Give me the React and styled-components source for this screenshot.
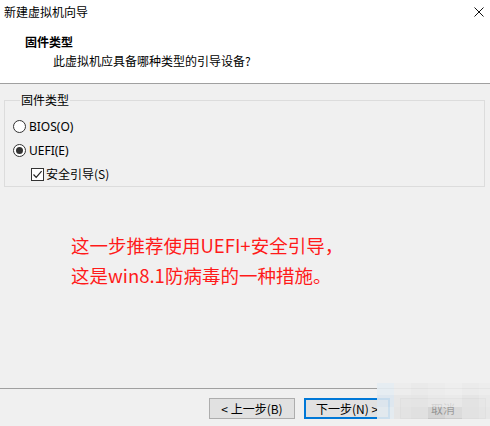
import React from "react";
import styled, { createGlobalStyle } from "styled-components";

const GlobalStyle = createGlobalStyle`
  html, body { margin: 0; padding: 0; }
  body {
    background: #f0f0f0;
    font-family: "Noto Sans CJK SC", "Noto Sans", sans-serif;
    font-size: 12px;
    color: #000;
  }
`;

const Page = styled.div`
  position: relative;
  width: 490px;
  height: 426px;
  display: flex;
  flex-direction: column;
  overflow: hidden;
`;

const Header = styled.header`
  height: 83px;
  background: #fff;
  border-bottom: 1px solid #a0a0a0;
  display: flex;
  flex-direction: column;
  flex-shrink: 0;
`;

const TitleBar = styled.div`
  height: 24px;
  display: flex;
  align-items: center;
  justify-content: space-between;
  padding: 0 6px 0 4px;
`;

const WindowTitle = styled.span`
  font-size: 12px;
  line-height: 24px;
  color: #000;
`;

const CloseIcon = styled.svg`
  width: 10px;
  height: 10px;
  display: block;
`;

const HeaderTitle = styled.div`
  margin: 10px 0 0 25px;
  font-weight: bold;
  font-size: 12px;
  line-height: 16px;
`;

const HeaderSubtitle = styled.div`
  margin: 3px 0 0 53px;
  font-size: 12px;
  line-height: 16px;
`;

const Main = styled.main`
  flex: 1;
  padding: 8px 5px 0 4px;
  display: flex;
  flex-direction: column;
`;

const Group = styled.fieldset`
  margin: 0;
  padding: 6px 0 0 8px;
  border: 1px solid #dcdcdc;
  min-width: 0;
`;

const Legend = styled.legend`
  padding: 0 1px;
  margin-left: 7px;
  font-size: 12px;
  line-height: 16px;
`;

const OptionRow = styled.label`
  height: 24px;
  display: flex;
  align-items: center;
  gap: ${(p) => p.$gap || 3}px;
  padding-left: ${(p) => p.$indent || 0}px;
  font-size: 12px;
  font-family: "Noto Sans", "Noto Sans CJK SC", sans-serif;
`;

const OptionText = styled.span`
  font-family: "Noto Sans CJK SC", "Noto Sans", sans-serif;
  line-height: 16px;
`;

const RadioCircle = styled.span`
  width: 11px;
  height: 11px;
  border: 1px solid #333;
  border-radius: 50%;
  background: #fff;
  display: flex;
  align-items: center;
  justify-content: center;
  flex-shrink: 0;
  &::after {
    content: "";
    width: 7px;
    height: 7px;
    border-radius: 50%;
    background: #333;
    display: ${(p) => (p.$checked ? "block" : "none")};
  }
`;

const CheckBox = styled.span`
  width: 11px;
  height: 11px;
  border: 1px solid #333;
  background: #fff;
  display: flex;
  align-items: center;
  justify-content: center;
  flex-shrink: 0;
`;

const Note = styled.div`
  margin: 43px 0 0 67px;
  color: #ff1a1a;
  font-size: 18.5px;
  line-height: 30px;
  font-family: "Noto Sans CJK SC", "Noto Sans", sans-serif;
`;

const Footer = styled.footer`
  height: 38px;
  box-sizing: border-box;
  border-top: 1px solid #a0a0a0;
  display: flex;
  justify-content: flex-end;
  align-items: flex-start;
  padding: 9px 4px 0 0;
  gap: 9px;
  flex-shrink: 0;
`;

const Button = styled.button`
  width: 86px;
  height: 21px;
  padding: 0;
  margin-left: ${(p) => p.$extra || 0}px;
  box-sizing: border-box;
  background: #e1e1e1;
  border: ${(p) => (p.$primary ? "2px solid #0078d7" : "1px solid #adadad")};
  font-family: "Noto Sans CJK SC", "Noto Sans", sans-serif;
  font-size: 12px;
  line-height: 17px;
  color: #000;
  display: flex;
  align-items: center;
  justify-content: center;
`;

const Mosaic = styled.div`
  position: absolute;
  left: 377px;
  top: 383px;
  display: grid;
  grid-template-columns: repeat(7, 17px);
  grid-auto-rows: 12px;
  pointer-events: none;
`;

const Cell = styled.div`
  background: ${(p) => p.$c};
  opacity: ${(p) => p.$o ?? 0.9};
`;

const mosaicColors = [
  ["#e4ecf2", "#ececec", "#e9e9e9", "#ebebeb", "#ededed", "#eaeaea", "#ececec"],
  ["#dbe6ee", "#e6e6e6", "#e4e4e4", "#e8e8e8", "#e9e9e9", "#e3e3e3", "#e8e8e8"],
  ["#e2eaf0", "#e3e3e3", "#e0e0e0", "#cfcfcf", "#d9d9d9", "#e2e2e2", "#e6e6e6"],
];

export default function App() {
  return (
    <>
      <GlobalStyle />
      <Page>
        <Header>
          <TitleBar>
            <WindowTitle>新建虚拟机向导</WindowTitle>
            <CloseIcon viewBox="0 0 10 10">
              <path d="M0.5 0.5 L9.5 9.5 M9.5 0.5 L0.5 9.5" stroke="#111" strokeWidth="1" fill="none" />
            </CloseIcon>
          </TitleBar>
          <HeaderTitle>固件类型</HeaderTitle>
          <HeaderSubtitle>此虚拟机应具备哪种类型的引导设备?</HeaderSubtitle>
        </Header>
        <Main>
          <Group>
            <Legend>固件类型</Legend>
            <OptionRow>
              <RadioCircle />
              <span>BIOS(O)</span>
            </OptionRow>
            <OptionRow>
              <RadioCircle $checked />
              <span>UEFI(E)</span>
            </OptionRow>
            <OptionRow $indent={18} $gap={2}>
              <CheckBox>
                <svg width="11" height="11" viewBox="0 0 11 11">
                  <path d="M1.5 5.5 L4.2 8.3 L9.6 2.2" stroke="#222" strokeWidth="1.2" fill="none" />
                </svg>
              </CheckBox>
              <OptionText>安全引导(S)</OptionText>
            </OptionRow>
          </Group>
          <Note>
            这一步推荐使用UEFI+安全引导，
            <br />
            这是win8.1防病毒的一种措施。
          </Note>
        </Main>
        <Footer>
          <Button>&lt; 上一步(B)</Button>
          <Button $primary>下一步(N) &gt;</Button>
          <Button $extra={1}>取消</Button>
        </Footer>
        <Mosaic>
          {mosaicColors.flatMap((row, r) =>
            row.map((c, i) => <Cell key={`${r}-${i}`} $c={c} $o={r === 2 && (i === 3 || i === 4) ? 0.7 : 0.9} />)
          )}
        </Mosaic>
      </Page>
    </>
  );
}
